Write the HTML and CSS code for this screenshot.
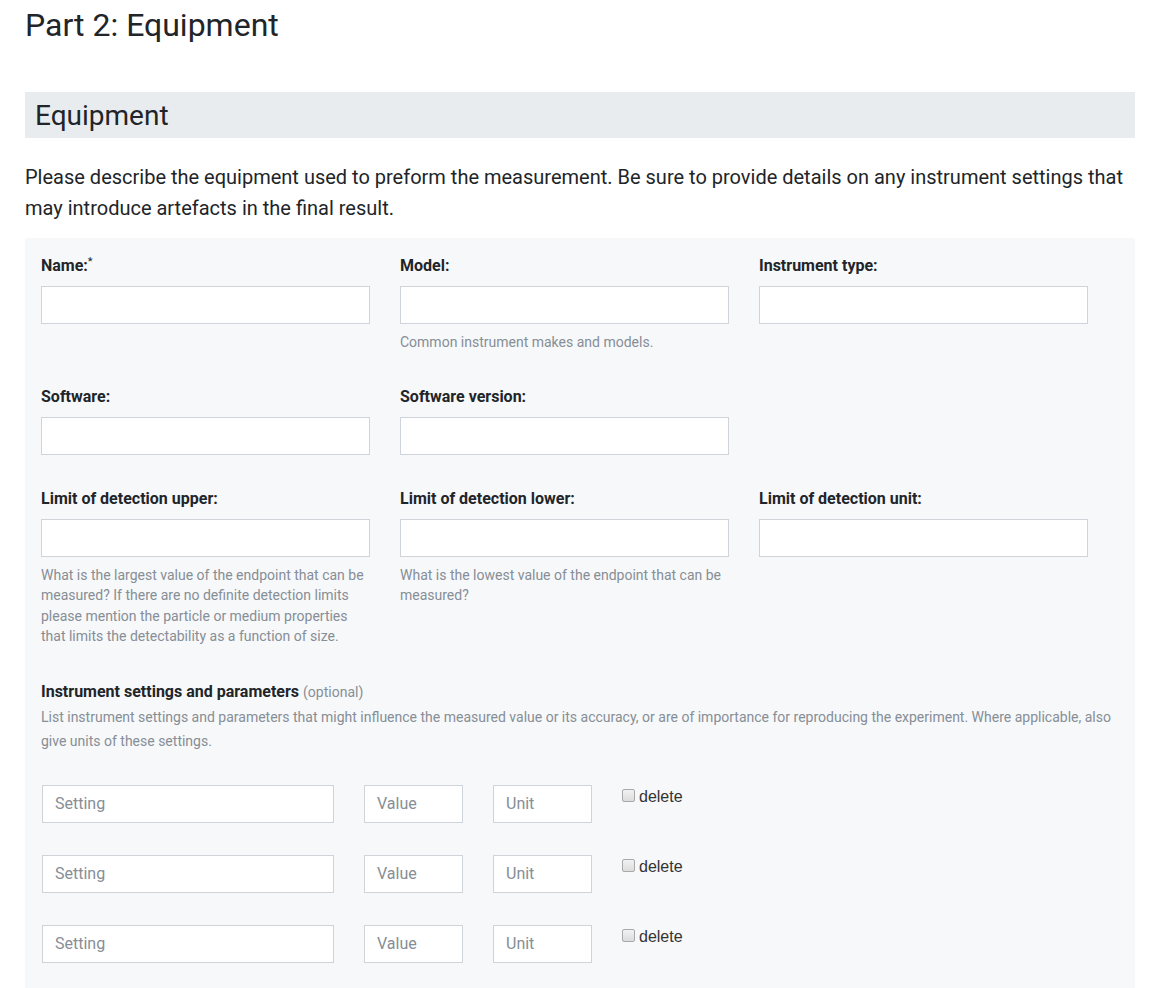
FILE: index.html
```html
<!DOCTYPE html>
<html lang="en">
<head>
<meta charset="utf-8">
<title>Part 2: Equipment</title>
<link rel="stylesheet" href="styles.css">
</head>
<body>
<main class="page">
  <h1 class="title">Part 2: Equipment</h1>
  <h2 class="band">Equipment</h2>
  <p class="intro">Please describe the equipment used to preform the measurement. Be sure to provide details on any instrument settings that may introduce artefacts in the final result.</p>
  <form class="panel">
    <div class="grid">
      <div class="field">
        <label class="label">Name:<sup class="req">*</sup></label>
        <input class="input" type="text">
      </div>
      <div class="field">
        <label class="label">Model:</label>
        <input class="input" type="text">
        <p class="help">Common instrument makes and models.</p>
      </div>
      <div class="field">
        <label class="label">Instrument type:</label>
        <input class="input" type="text">
      </div>
    </div>
    <div class="grid">
      <div class="field">
        <label class="label">Software:</label>
        <input class="input" type="text">
      </div>
      <div class="field">
        <label class="label">Software version:</label>
        <input class="input" type="text">
      </div>
    </div>
    <div class="grid">
      <div class="field">
        <label class="label">Limit of detection upper:</label>
        <input class="input" type="text">
        <p class="help">What is the largest value of the endpoint that can be measured? If there are no definite detection limits please mention the particle or medium properties that limits the detectability as a function of size.</p>
      </div>
      <div class="field">
        <label class="label">Limit of detection lower:</label>
        <input class="input" type="text">
        <p class="help">What is the lowest value of the endpoint that can be measured?</p>
      </div>
      <div class="field">
        <label class="label">Limit of detection unit:</label>
        <input class="input" type="text">
      </div>
    </div>
    <div class="settings">
      <div class="label">Instrument settings and parameters <span class="optional">(optional)</span></div>
      <p class="settings-help">List instrument settings and parameters that might influence the measured value or its accuracy, or are of importance for reproducing the experiment. Where applicable, also give units of these settings.</p>
      <div class="rows">
        <div class="row">
          <input class="input setting" type="text" placeholder="Setting">
          <input class="input value" type="text" placeholder="Value">
          <input class="input unit" type="text" placeholder="Unit">
          <label class="del"><input class="check" type="checkbox"> delete</label>
        </div>
        <div class="row">
          <input class="input setting" type="text" placeholder="Setting">
          <input class="input value" type="text" placeholder="Value">
          <input class="input unit" type="text" placeholder="Unit">
          <label class="del"><input class="check" type="checkbox"> delete</label>
        </div>
        <div class="row">
          <input class="input setting" type="text" placeholder="Setting">
          <input class="input value" type="text" placeholder="Value">
          <input class="input unit" type="text" placeholder="Unit">
          <label class="del"><input class="check" type="checkbox"> delete</label>
        </div>
      </div>
    </div>
  </form>
</main>
</body>
</html>
```
FILE: styles.css
```css
html, body {
  margin: 0;
  padding: 0;
  background: #fff;
}
body {
  font-family: Roboto, "Liberation Sans", sans-serif;
  color: #212529;
}
.page {
  width: 1110px;
  margin-left: 25px;
}
.title {
  font-size: 32px;
  font-weight: 400;
  line-height: 38px;
  margin: 6px 0 0 0;
}
.band {
  margin: 48px 0 0 0;
  background: #e9ecef;
  font-size: 28px;
  font-weight: 400;
  line-height: 45px;
  padding: 1px 10px 0 10px;
}
.intro {
  font-size: 20px;
  line-height: 31px;
  margin: 24px 0 0 0;
}
.panel {
  margin-top: 14px;
  background: #f7f8fa;
  padding: 16px 16px 30px 16px;
}
.grid {
  display: grid;
  grid-template-columns: 329px 329px 329px;
  column-gap: 30px;
  margin-bottom: 32px;
}
.field {
  display: flex;
  flex-direction: column;
}
.label {
  font-size: 16px;
  font-weight: 700;
  line-height: 24px;
  margin-bottom: 8px;
  color: #212529;
}
.req {
  font-size: 11px;
  font-weight: 400;
  vertical-align: top;
  position: relative;
  top: -4px;
}
.input {
  box-sizing: border-box;
  height: 38px;
  width: 100%;
  background: #fff;
  border: 1px solid #ced4da;
  border-radius: 0;
  padding: 6px 12px;
  font-family: Roboto, "Liberation Sans", sans-serif;
  font-size: 16px;
  color: #495057;
  margin: 0;
}
.input::placeholder {
  color: #868e96;
}
.help {
  font-size: 14px;
  line-height: 20.5px;
  color: #868e96;
  margin: 8px 0 0 0;
}
.settings {
  padding-top: 1px;
}
.settings .label {
  margin-bottom: 0;
}
.optional {
  font-size: 14px;
  font-weight: 400;
  color: #868e96;
}
.settings-help {
  font-size: 14px;
  line-height: 24px;
  color: #868e96;
  margin: 1px 0 0 0;
}
.rows {
  margin-top: 32px;
  display: flex;
  flex-direction: column;
  gap: 32px;
  padding-left: 1px;
}
.row {
  display: flex;
  align-items: flex-start;
  gap: 30px;
}
.setting { width: 292px; }
.value { width: 99px; }
.unit { width: 99px; }
.del {
  display: flex;
  align-items: center;
  font-family: Arial, "Liberation Sans", sans-serif;
  font-size: 16px;
  color: #333;
  line-height: 20px;
  margin-top: 2px;
}
.check {
  appearance: none;
  -webkit-appearance: none;
  box-sizing: border-box;
  width: 13px;
  height: 13px;
  margin: 0 4px 2px 0;
  border: 1px solid #a9a9a9;
  border-radius: 2px;
  background: linear-gradient(#f2f2f2, #dcdcdc);
}
```
